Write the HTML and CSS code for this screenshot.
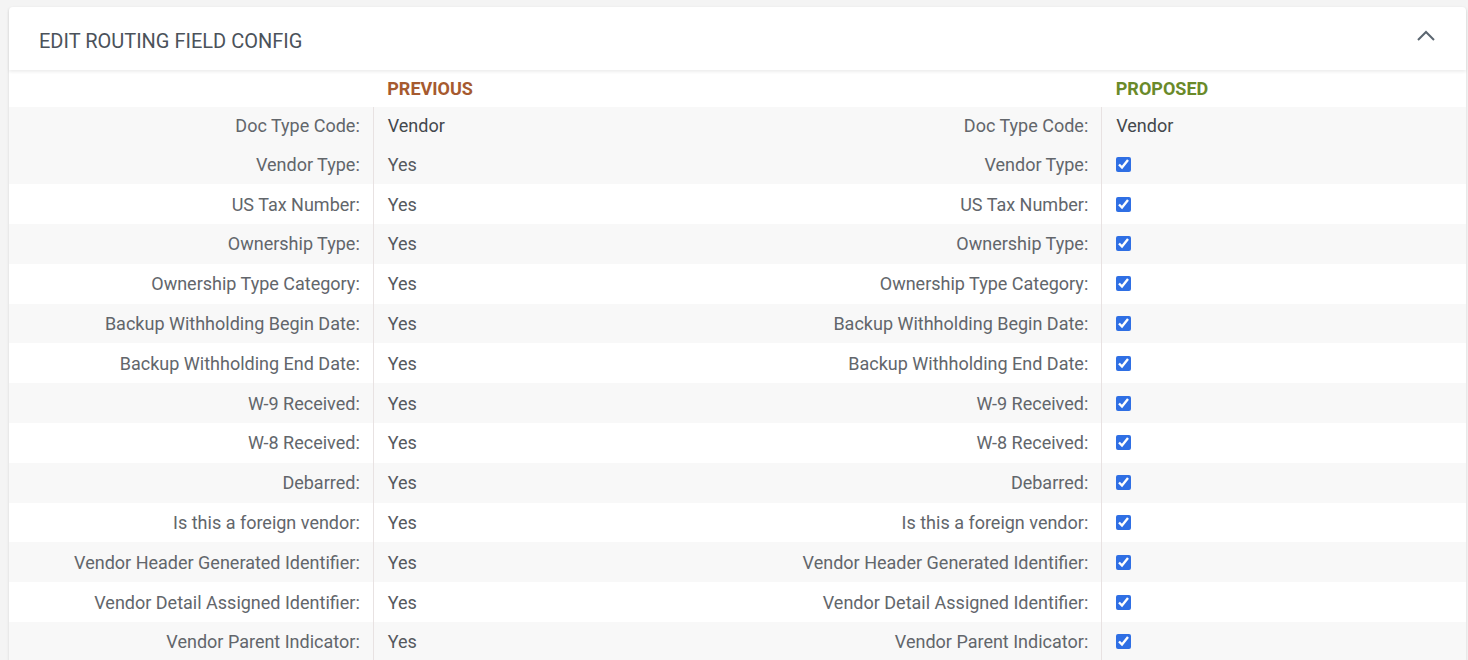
FILE: index.html
```html
<!DOCTYPE html>
<html lang="en">
<head>
    <meta charset="UTF-8">
    <meta name="viewport" content="width=device-width, initial-scale=1.0">
    <title>Edit Routing Field Config</title>
    <link rel="stylesheet" href="styles.css">
</head>
<body>
    <div class="card">
        <div class="card-header">
            <h2>EDIT ROUTING FIELD CONFIG</h2>
            <svg class="chevron" width="20" height="12" viewBox="0 0 20 12">
                <path d="M2 10 L10 2 L18 10" fill="none" stroke="#5b6670" stroke-width="2"/>
            </svg>
        </div>
        <table class="compare">
            <thead>
                <tr>
                    <th></th>
                    <th class="previous">PREVIOUS</th>
                    <th></th>
                    <th class="proposed">PROPOSED</th>
                </tr>
            </thead>
            <tbody>
                <tr class="first shade">
                    <td class="label">Doc Type Code:</td>
                    <td class="value">Vendor</td>
                    <td class="label">Doc Type Code:</td>
                    <td class="value">Vendor</td>
                </tr>
                <tr class="shade">
                    <td class="label">Vendor Type:</td>
                    <td class="value">Yes</td>
                    <td class="label">Vendor Type:</td>
                    <td class="value"><input type="checkbox" checked></td>
                </tr>
                <tr>
                    <td class="label">US Tax Number:</td>
                    <td class="value">Yes</td>
                    <td class="label">US Tax Number:</td>
                    <td class="value"><input type="checkbox" checked></td>
                </tr>
                <tr class="shade">
                    <td class="label">Ownership Type:</td>
                    <td class="value">Yes</td>
                    <td class="label">Ownership Type:</td>
                    <td class="value"><input type="checkbox" checked></td>
                </tr>
                <tr>
                    <td class="label">Ownership Type Category:</td>
                    <td class="value">Yes</td>
                    <td class="label">Ownership Type Category:</td>
                    <td class="value"><input type="checkbox" checked></td>
                </tr>
                <tr class="shade">
                    <td class="label">Backup Withholding Begin Date:</td>
                    <td class="value">Yes</td>
                    <td class="label">Backup Withholding Begin Date:</td>
                    <td class="value"><input type="checkbox" checked></td>
                </tr>
                <tr>
                    <td class="label">Backup Withholding End Date:</td>
                    <td class="value">Yes</td>
                    <td class="label">Backup Withholding End Date:</td>
                    <td class="value"><input type="checkbox" checked></td>
                </tr>
                <tr class="shade">
                    <td class="label">W-9 Received:</td>
                    <td class="value">Yes</td>
                    <td class="label">W-9 Received:</td>
                    <td class="value"><input type="checkbox" checked></td>
                </tr>
                <tr>
                    <td class="label">W-8 Received:</td>
                    <td class="value">Yes</td>
                    <td class="label">W-8 Received:</td>
                    <td class="value"><input type="checkbox" checked></td>
                </tr>
                <tr class="shade">
                    <td class="label">Debarred:</td>
                    <td class="value">Yes</td>
                    <td class="label">Debarred:</td>
                    <td class="value"><input type="checkbox" checked></td>
                </tr>
                <tr>
                    <td class="label">Is this a foreign vendor:</td>
                    <td class="value">Yes</td>
                    <td class="label">Is this a foreign vendor:</td>
                    <td class="value"><input type="checkbox" checked></td>
                </tr>
                <tr class="shade">
                    <td class="label">Vendor Header Generated Identifier:</td>
                    <td class="value">Yes</td>
                    <td class="label">Vendor Header Generated Identifier:</td>
                    <td class="value"><input type="checkbox" checked></td>
                </tr>
                <tr>
                    <td class="label">Vendor Detail Assigned Identifier:</td>
                    <td class="value">Yes</td>
                    <td class="label">Vendor Detail Assigned Identifier:</td>
                    <td class="value"><input type="checkbox" checked></td>
                </tr>
                <tr class="shade">
                    <td class="label">Vendor Parent Indicator:</td>
                    <td class="value">Yes</td>
                    <td class="label">Vendor Parent Indicator:</td>
                    <td class="value"><input type="checkbox" checked></td>
                </tr>
            </tbody>
        </table>
    </div>
</body>
</html>
```

FILE: styles.css
```css
* {
    margin: 0;
    padding: 0;
    box-sizing: border-box;
}
body {
    font-family: Roboto, "Liberation Sans", sans-serif;
    background-color: #f4f4f4;
    overflow: hidden;
}
.card {
    margin: 7px 2px 0 9px;
    background-color: #fff;
    border-radius: 4px 4px 0 0;
    box-shadow: 0 1px 3px rgba(0, 0, 0, 0.12);
}
.card-header {
    height: 63px;
    display: flex;
    align-items: center;
    justify-content: space-between;
    padding: 0 30px 0 30px;
    box-shadow: 0 2px 3px rgba(0, 0, 0, 0.07);
    position: relative;
}
.card-header h2 {
    font-size: 20px;
    font-weight: 400;
    color: #4b525a;
    margin-top: 4px;
}
.chevron {
    margin-top: -6px;
}
.compare {
    width: 100%;
    border-collapse: collapse;
    table-layout: fixed;
    font-size: 18px;
}
.compare th {
    height: 37px;
    text-align: left;
    font-weight: 700;
    padding: 0 14px;
    vertical-align: middle;
}
.compare .previous {
    color: #a65a2f;
}
.compare .proposed {
    color: #6a8a2a;
}
.compare td {
    height: 39.8px;
    vertical-align: middle;
    padding: 0 13px;
}
.compare tr.first td {
    height: 37.5px;
}
.compare tr.shade td {
    background-color: #f8f8f8;
}
.compare .label {
    text-align: right;
    color: #62666b;
    border-right: 1px solid #e8e2e2;
}
.compare .value {
    color: #55595e;
    padding-left: 14px;
}
.compare tr.first .value {
    color: #44484d;
}
.compare input[type="checkbox"] {
    width: 15px;
    height: 15px;
    margin: 0;
    display: block;
    accent-color: #2f6fe4;
}
```
